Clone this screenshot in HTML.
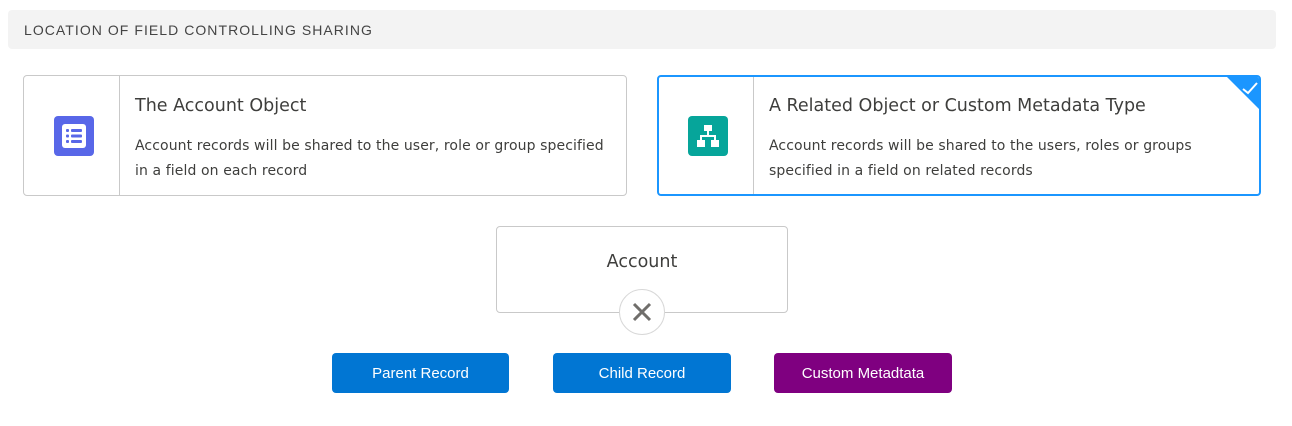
<!DOCTYPE html>
<html><head><style>
body{margin:0;width:1292px;height:426px;background:#fff;font-family:"Liberation Sans",sans-serif;position:relative;overflow:hidden;color:#3e3e3c}
.hdr{position:absolute;left:8px;top:10px;width:1268px;height:39px;background:#f3f3f3;border-radius:4px;font-size:14px;letter-spacing:1.05px;line-height:40px;padding-left:16px;box-sizing:border-box;color:#444}
.card{position:absolute;top:75px;width:604px;height:121px;border:1px solid #c9c9c9;border-radius:4px;box-sizing:border-box;overflow:hidden;background:#fff}
.card.sel{border:2px solid #1b96ff}
.div{position:absolute;left:95px;top:0;bottom:0;border-left:1px solid #c9c9c9}
.ic{position:absolute;left:30px;top:40px;width:40px;height:40px;border-radius:4px}
.t{position:absolute;left:111px;top:20px;font-size:17.5px;color:#3e3e3c;font-family:"DejaVu Sans",sans-serif}
.d{position:absolute;left:111px;top:58px;font-size:14px;line-height:25px;color:#3e3e3c;width:485px;font-family:"DejaVu Sans",sans-serif;letter-spacing:0.1px}
.btn{position:absolute;top:353px;height:40px;border-radius:4px;color:#fff;font-size:15px;text-align:center;line-height:42px}
</style></head><body>
<div class="hdr">LOCATION OF FIELD CONTROLLING SHARING</div>
<div class="card" style="left:23px">
 <div class="div"></div>
 <div class="ic" style="background:#5867e8"><svg width="40" height="40" viewBox="0 0 40 40"><rect x="8" y="8" width="24" height="24" rx="3" fill="#fff"/><g fill="#5867e8"><rect x="12" y="13" width="3" height="3" rx="1"/><rect x="12" y="18.5" width="3" height="3" rx="1"/><rect x="12" y="24" width="3" height="3" rx="1"/><rect x="17" y="13" width="11" height="3" rx="1"/><rect x="17" y="18.5" width="11" height="3" rx="1"/><rect x="17" y="24" width="11" height="3" rx="1"/></g></svg></div>
 <div class="t">The Account Object</div>
 <div class="d">Account records will be shared to the user, role or group specified in a field on each record</div>
</div>
<div class="card sel" style="left:657px">
 <div class="div" style="left:94px"></div>
 <div class="ic" style="left:29px;top:39px;background:#06a59a"><svg width="40" height="40" viewBox="0 0 40 40"><g fill="#fff"><rect x="16" y="9" width="8" height="6"/><rect x="19" y="15" width="2" height="5"/><rect x="12" y="19" width="16" height="2"/><rect x="12" y="20" width="2" height="4"/><rect x="26" y="20" width="2" height="4"/><rect x="9" y="24" width="8" height="7"/><rect x="23" y="24" width="8" height="7"/></g></svg></div>
 <div class="t" style="left:110px;top:19px">A Related Object or Custom Metadata Type</div>
 <div class="d" style="left:110px;top:57px">Account records will be shared to the users, roles or groups specified in a field on related records</div>
 <svg style="position:absolute;right:0;top:0" width="32" height="32" viewBox="0 0 32 32"><path d="M0 0H32V32Z" fill="#1b96ff"/><path d="M16 12L21 16L30 6" stroke="#fff" stroke-width="2" fill="none"/></svg>
</div>
<div style="position:absolute;left:496px;top:226px;width:292px;height:87px;border:1px solid #c9c9c9;border-radius:4px;box-sizing:border-box;text-align:center;font-size:17.5px;line-height:71px;color:#3e3e3c;font-family:'DejaVu Sans',sans-serif">Account</div>
<div style="position:absolute;left:619px;top:289px;width:46px;height:46px;border:1px solid #d8d8d8;border-radius:50%;background:#fff;box-sizing:border-box"><svg width="46" height="46" viewBox="0 0 46 46" style="position:absolute;left:-1px;top:-1px"><path d="M15 15L31 31M31 15L15 31" stroke="#706e6b" stroke-width="3"/></svg></div>
<div class="btn" style="left:332px;width:177px;background:#0176d3">Parent Record</div>
<div class="btn" style="left:553px;width:178px;background:#0176d3">Child Record</div>
<div class="btn" style="left:774px;width:178px;background:#7f0080">Custom Metadtata</div>
</body></html>
